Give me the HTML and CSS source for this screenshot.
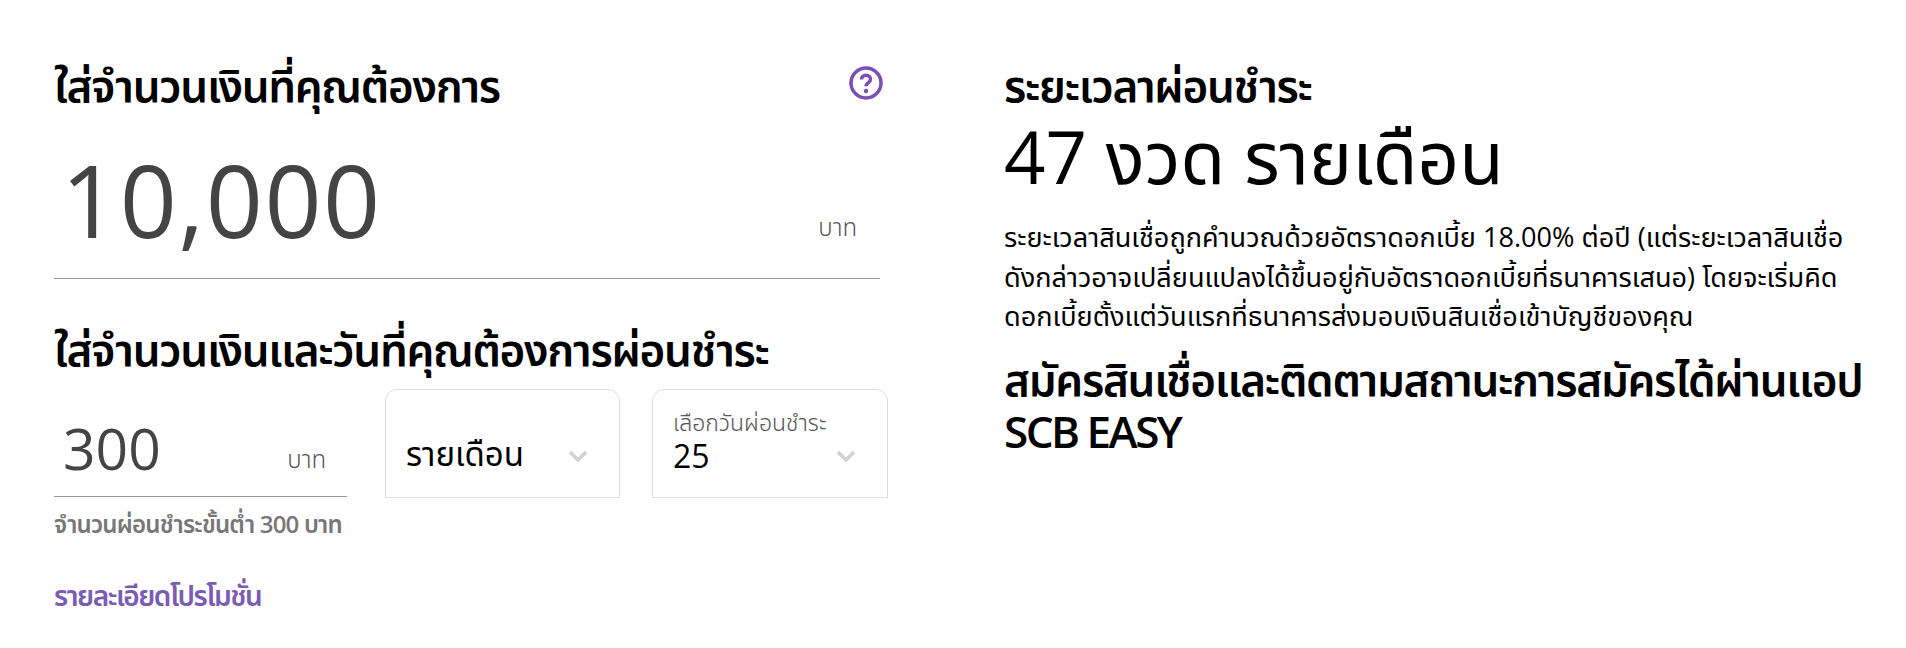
FILE: index.html
```html
<!DOCTYPE html>
<html lang="th">
<head>
<meta charset="utf-8">
<title>SCB</title>
<link rel="stylesheet" href="styles.css">
</head>
<body>
<main class="page">
  <section class="left">
    <div class="title-row">
      <h2 class="heading">ใส่จำนวนเงินที่คุณต้องการ</h2>
      <svg class="help" viewBox="0 0 34 34" aria-hidden="true">
        <circle cx="17" cy="17" r="15" fill="none" stroke="#7b4fb5" stroke-width="3.500"/>
        <path d="M12.500 13.500c0-2.700 2-4.300 4.500-4.300s4.500 1.600 4.500 4c0 3.600-4.500 3.600-4.500 7" fill="none" stroke="#7b4fb5" stroke-width="3.500"/>
        <circle cx="17" cy="25" r="2.200" fill="#7b4fb5"/>
      </svg>
    </div>
    <div class="amount">
      <span class="amount-value">10,000</span>
      <span class="unit">บาท</span>
    </div>
    <h2 class="heading heading-second">ใส่จำนวนเงินและวันที่คุณต้องการผ่อนชำระ</h2>
    <div class="controls">
      <div class="pay">
        <div class="pay-box">
          <span class="pay-value">300</span>
          <span class="unit">บาท</span>
        </div>
        <p class="note">จำนวนผ่อนชำระขั้นต่ำ 300 บาท</p>
      </div>
      <div class="select select-plain">
        <span class="select-value">รายเดือน</span>
        <svg class="chevron" viewBox="0 0 20 12" aria-hidden="true"><path d="M2 2l8 8 8-8" fill="none" stroke="#d2d2d2" stroke-width="3.500"/></svg>
      </div>
      <div class="select">
        <div class="select-text">
          <span class="select-label">เลือกวันผ่อนชำระ</span>
          <span class="select-value">25</span>
        </div>
        <svg class="chevron" viewBox="0 0 20 12" aria-hidden="true"><path d="M2 2l8 8 8-8" fill="none" stroke="#d2d2d2" stroke-width="3.500"/></svg>
      </div>
    </div>
    <a class="promo" href="#">รายละเอียดโปรโมชั่น</a>
  </section>
  <section class="right">
    <h2 class="heading">ระยะเวลาผ่อนชำระ</h2>
    <p class="term">47 งวด รายเดือน</p>
    <p class="desc">ระยะเวลาสินเชื่อถูกคำนวณด้วยอัตราดอกเบี้ย 18.00% ต่อปี (แต่ระยะเวลาสินเชื่อ<br>ดังกล่าวอาจเปลี่ยนแปลงได้ขึ้นอยู่กับอัตราดอกเบี้ยที่ธนาคารเสนอ) โดยจะเริ่มคิด<br>ดอกเบี้ยตั้งแต่วันแรกที่ธนาคารส่งมอบเงินสินเชื่อเข้าบัญชีของคุณ</p>
    <h2 class="heading apply">สมัครสินเชื่อและติดตามสถานะการสมัครได้ผ่านแอป<br><span class="latin">SCB EASY</span></h2>
  </section>
</main>
</body>
</html>
```
FILE: styles.css
```css
* { box-sizing: border-box; }
html, body { margin: 0; background: #fff; }
body { font-family: "Open Sans", "Noto Sans Thai", sans-serif; color: #000; height: 648px; overflow: hidden; }
.page { display: grid; grid-template-columns: 1004px 1fr; }
.left { padding: 57px 0 0 54px; width: 888px; }
.right { padding-top: 57px; }
.heading { margin: 0; font-size: 44px; line-height: 56px; font-weight: 600; letter-spacing: -1.300px; white-space: nowrap; }
.title-row { display: flex; justify-content: space-between; align-items: center; height: 56px; }
.help { width: 34px; height: 34px; margin: -4px 5px 0 0; }
.amount { display: flex; justify-content: space-between; align-items: flex-end; width: 826px; height: 166px; border-bottom: 1px solid #999; padding: 0 23px 24px 7px; color: #444; }
.amount-value { font-size: 100px; line-height: 110px; letter-spacing: 1.500px; }
.unit { font-size: 24px; line-height: 34px; color: #555; margin-bottom: 10px; font-weight: 300; }
.heading-second { margin-top: 42px; }
.controls { display: flex; align-items: flex-start; margin-top: 12px; }
.pay { width: 293px; margin-right: 38px; }
.pay-box { display: flex; justify-content: space-between; align-items: flex-end; height: 108px; border-bottom: 1px solid #999; padding: 0 21px 10px 9px; color: #444; }
.pay-value { font-size: 57px; line-height: 76px; }
.note { margin: 10px 0 0; font-size: 24px; line-height: 34px; font-weight: 600; letter-spacing: -0.800px; color: #777; white-space: nowrap; }
.select { display: flex; align-items: center; justify-content: space-between; width: 235px; height: 109px; border: 1px solid #ddd; border-radius: 12px 12px 0 0; padding: 0 31px 0 20px; margin-right: 32px; }
.select:last-child { margin-right: 0; width: 236px; }
.select-plain .select-value { margin-top: 20px; font-size: 33px; }
.select-text { display: flex; flex-direction: column; margin-top: -6px; }
.select-label { font-size: 23px; line-height: 30px; color: #555; white-space: nowrap; font-weight: 300; }
.select-value { font-size: 32px; line-height: 38px; }
.chevron { width: 20px; height: 12px; margin-top: 24px; }
.promo { display: block; margin-top: 34px; font-size: 28px; line-height: 40px; font-weight: 600; letter-spacing: -1.500px; color: #7b5cb5; text-decoration: none; }
.term { margin: -3px 0 0; font-size: 72.600px; line-height: 92px; }
.desc { margin: 15px 0 0; font-size: 27.100px; line-height: 39.500px; }
.apply { margin-top: 17px; line-height: 52px; }
.latin { letter-spacing: -2.500px; }
```
